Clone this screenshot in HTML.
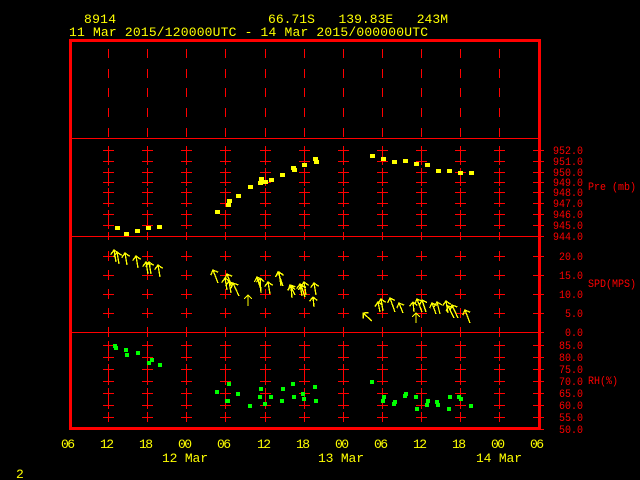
<!DOCTYPE html>
<html><head><meta charset="utf-8"><style>
html,body{margin:0;padding:0;background:#000;width:640px;height:480px;overflow:hidden}
svg{display:block}
text{font-family:"Liberation Mono",monospace;white-space:pre}
</style></head><body>
<svg id="s" width="640" height="480" viewBox="0 0 640 480" shape-rendering="crispEdges">
<rect width="640" height="480" fill="#000"/>
<g fill="#ffff00" font-size="13">
<text x="84" y="23" textLength="32">8914</text>
<text x="268" y="23" textLength="180" xml:space="preserve">66.71S   139.83E   243M</text>
<text x="69" y="36" textLength="359">11 Mar 2015/120000UTC - 14 Mar 2015/000000UTC</text>
<text x="61" y="448" textLength="14">06</text>
<text x="100" y="448" textLength="14">12</text>
<text x="139" y="448" textLength="14">18</text>
<text x="178" y="448" textLength="14">00</text>
<text x="217" y="448" textLength="14">06</text>
<text x="257" y="448" textLength="14">12</text>
<text x="296" y="448" textLength="14">18</text>
<text x="335" y="448" textLength="14">00</text>
<text x="374" y="448" textLength="14">06</text>
<text x="413" y="448" textLength="14">12</text>
<text x="452" y="448" textLength="14">18</text>
<text x="491" y="448" textLength="14">00</text>
<text x="530" y="448" textLength="14">06</text>
<text x="162" y="462" textLength="46">12 Mar</text>
<text x="318" y="462" textLength="46">13 Mar</text>
<text x="476" y="462" textLength="46">14 Mar</text>
<text x="16" y="478">2</text>
</g>
<g id="grid" stroke="#ff0000" stroke-width="1" fill="none"></g>
<g id="dat"></g>
<g fill="#ff0000" font-size="11" id="lab"></g>
<g fill="none" stroke="#ff0000" stroke-width="3">
<rect x="70.5" y="40.5" width="469" height="388"/>
</g>
</svg>
<script>
var NS="http://www.w3.org/2000/svg";
function el(p,t,a,txt){var e=document.createElementNS(NS,t);for(var k in a)e.setAttribute(k,a[k]);if(txt)e.textContent=txt;document.getElementById(p).appendChild(e);}
var xs=[108,147,186,225,265,304,343,382,421,460,499];
[138.5,236.5,332.5].forEach(function(y){el('grid','line',{x1:70,y1:y,x2:540,y2:y});});
xs.forEach(function(x){[[49,58],[69,78],[88,97],[108,117],[128,137]].forEach(function(s){el('grid','line',{x1:x+.5,y1:s[0],x2:x+.5,y2:s[1]});});});
var pre=[[952,150],[951,161],[950,172],[949,182],[948,192],[947,203],[946,214],[945,225],[944,236]];
var spd=[[20,256],[15,275],[10,294],[5,313],[0,332]];
var rh=[[85,345],[80,357],[75,369],[70,381],[65,393],[60,405],[55,417],[50,429]];
var segs=[[146,165],[168,186],[188,207],[210,229],[232,240],[251,261],[270,280],[289,299],[308,318],[327,337],[341,361],[364,385],[388,409],[412,422]];
xs.concat([538]).forEach(function(x){
  if(x!=538) segs.forEach(function(s){el('grid','line',{x1:x+.5,y1:s[0],x2:x+.5,y2:s[1]});});
  pre.concat(spd,rh).forEach(function(p){el('grid','line',{x1:x-5,y1:p[1]+.5,x2:x+6,y2:p[1]+.5});});
});
function lab(v,y){var t=v.toFixed(1);el('lab','text',{x:583-t.length*6,y:y+4,textLength:t.length*6,lengthAdjust:'spacingAndGlyphs'},t);}
pre.forEach(function(p){lab(p[0],p[1]);});
spd.forEach(function(p){lab(p[0],p[1]);});
rh.forEach(function(p){lab(p[0],p[1]);});
el('lab','text',{x:588,y:190,textLength:48,lengthAdjust:'spacingAndGlyphs'},'Pre (mb)');
el('lab','text',{x:588,y:287,textLength:48,lengthAdjust:'spacingAndGlyphs'},'SPD(MPS)');
el('lab','text',{x:588,y:384,textLength:30,lengthAdjust:'spacingAndGlyphs'},'RH(%)');
[[117,228],[126,234],[137,231],[148,228],[159,227],[217,212],[228,205],[229,201],[238,196],[250,187],[260,183],[261,179],[265,182],[271,180],[282,175],[293,168],[294,170],[304,165],[315,159],[316,162],[372,156],[383,159],[394,162],[405,161],[416,164],[427,165],[438,171],[449,171],[460,173],[471,173]].forEach(function(p){el('dat','rect',{x:p[0]-2,y:p[1]-2,width:5,height:4,fill:'#ffff00'});});
[[115,346],[116,348],[126,350],[127,355],[138,353],[149,363],[152,360],[160,365],[217,392],[229,384],[227,401],[228,401],[238,394],[250,406],[261,389],[260,397],[265,404],[271,397],[282,401],[283,389],[293,384],[294,397],[303,394],[304,399],[315,387],[316,401],[372,382],[384,397],[383,401],[394,404],[395,402],[406,394],[405,396],[416,397],[417,409],[428,401],[427,405],[438,405],[437,402],[450,397],[449,409],[459,397],[461,399],[471,406]].forEach(function(p){el('dat','rect',{x:p[0]-2,y:p[1]-2,width:4,height:4,fill:'#00ff00'});});
var ar=[[114,250,116,262],[117,252,119,264],[125,253,127,265],[136,256,138,268],[146,262,148,274],[149,262,151,274],[158,265,160,277],
[213,270,218,283],[225,278,227,290],[227,274,232,287],[229,281,231,293],[233,283,239,296],[248,295,248,306],[257,277,261,290],[260,278,261,293],[268,282,270,294],[278,272,283,286],[279,272,281,286],[291,286,292,298],[290,285,295,295],[300,284,302,296],[301,285,305,297],[304,282,306,295],[314,283,316,295],[313,297,314,307],
[363,313,372,321],[378,302,380,312],[381,299,383,311],[390,298,395,312],[399,303,403,313],[413,302,414,312],[417,299,422,312],[416,313,416,323],[422,300,426,312],[432,303,436,314],[437,302,440,314],[446,301,448,313],[448,306,454,318],[452,305,458,318],[465,310,470,323]];
ar.forEach(function(a){
  el('dat','line',{x1:a[0],y1:a[1],x2:a[2],y2:a[3],stroke:'#ffff00','stroke-width':1.3});
  var dx=a[2]-a[0],dy=a[3]-a[1],L=Math.sqrt(dx*dx+dy*dy);dx/=L;dy/=L;
  var px=-dy,py=dx;
  el('dat','polyline',{points:(a[0]+dx*4+px*4)+','+(a[1]+dy*4+py*4)+' '+a[0]+','+a[1]+' '+(a[0]+dx*4-px*4)+','+(a[1]+dy*4-py*4),stroke:'#ffff00','stroke-width':1.3,fill:'none'});
});
</script>
</body></html>
